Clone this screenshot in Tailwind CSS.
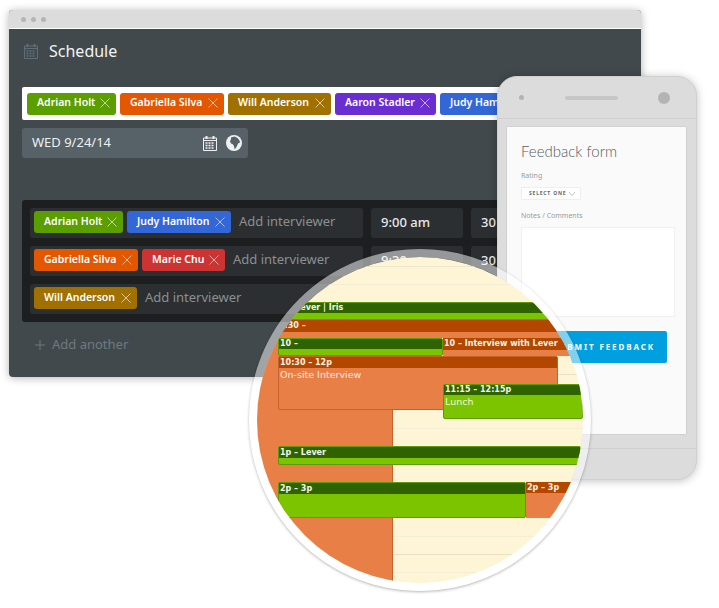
<!DOCTYPE html>
<html>
<head>
  <title>Schedule</title>
  <meta name="viewport" content="width=device-width, initial-scale=1">
  <script src="https://cdn.jsdelivr.net/npm/@tailwindcss/browser@4"></script>
</head>
<body class="bg-white font-['Noto_Sans',sans-serif]">
  <main class="relative w-[719px] h-[608px] overflow-hidden">

    <!-- desktop window -->
    <section class="absolute left-[9px] top-[10px] w-[632px] h-[367px] flex flex-col rounded-[4px] overflow-hidden bg-[#41494c] shadow-[0_1px_8px_rgba(0,0,0,0.3)]">
      <div class="h-[19px] shrink-0 flex items-center gap-[5px] pl-[12px] bg-[#dcdcdc] border-b border-white">
        <span class="w-[5px] h-[5px] rounded-full bg-[#b5b5b5]"></span>
        <span class="w-[5px] h-[5px] rounded-full bg-[#b5b5b5]"></span>
        <span class="w-[5px] h-[5px] rounded-full bg-[#b5b5b5]"></span>
      </div>
      <div class="flex flex-col pl-[13px]">
        <header class="h-[44px] flex items-center gap-[11px] pl-[2px] text-[#f2f3f3] text-[16px]">
          <svg width="14" height="16" viewBox="0 0 14 16" fill="none" stroke="#5f6f78"><path d="M.5 3h13v12.500H.5zM.5 5.500h13"/><path d="M3.500 1v3M10.500 1v3" stroke-width="2"/><path d="M2.500 8h9M2.500 10.500h9M2.500 13h9" stroke-width="1.500" stroke-dasharray="2 1"/></svg>
          Schedule
        </header>

        <div class="mt-[14px] h-[33px] w-[540px] flex items-center gap-[4px] pl-[5px] bg-white rounded-[2px] whitespace-nowrap">
          <span class="h-[22px] w-[89px] shrink-0 flex items-center justify-between pl-[10px] pr-[6px] pb-[1px] rounded-[3px] bg-[#5a9e00] text-white text-[10.500px] font-semibold">Adrian Holt
            <svg width="10" height="10" viewBox="0 0 10 10" stroke="#fff" stroke-opacity=".6"><path d="M.5.500l9 9M9.500.500l-9 9"/></svg></span>
          <span class="h-[22px] w-[104px] shrink-0 flex items-center justify-between pl-[10px] pr-[6px] pb-[1px] rounded-[3px] bg-[#e25700] text-white text-[10.500px] font-semibold">Gabriella Silva
            <svg width="10" height="10" viewBox="0 0 10 10" stroke="#fff" stroke-opacity=".6"><path d="M.5.500l9 9M9.500.500l-9 9"/></svg></span>
          <span class="h-[22px] w-[103px] shrink-0 flex items-center justify-between pl-[10px] pr-[6px] pb-[1px] rounded-[3px] bg-[#a07000] text-white text-[10.500px] font-semibold">Will Anderson
            <svg width="10" height="10" viewBox="0 0 10 10" stroke="#fff" stroke-opacity=".6"><path d="M.5.500l9 9M9.500.500l-9 9"/></svg></span>
          <span class="h-[22px] w-[101px] shrink-0 flex items-center justify-between pl-[10px] pr-[6px] pb-[1px] rounded-[3px] bg-[#6a2dd1] text-white text-[10.500px] font-semibold">Aaron Stadler
            <svg width="10" height="10" viewBox="0 0 10 10" stroke="#fff" stroke-opacity=".6"><path d="M.5.500l9 9M9.500.500l-9 9"/></svg></span>
          <span class="h-[22px] w-[104px] shrink-0 flex items-center justify-between pl-[10px] pr-[6px] pb-[1px] rounded-[3px] bg-[#3366d6] text-white text-[10.500px] font-semibold">Judy Hamilton
            <svg width="10" height="10" viewBox="0 0 10 10" stroke="#fff" stroke-opacity=".6"><path d="M.5.500l9 9M9.500.500l-9 9"/></svg></span>
        </div>

        <div class="mt-[8px] h-[30px] w-[226px] flex items-center justify-between pl-[10px] pr-[6px] rounded-[3px] bg-[#566268] text-[#eef0f0] text-[13px]">
          WED 9/24/14
          <div class="flex items-center gap-[9px]">
            <svg width="14" height="16" viewBox="0 0 14 16" fill="none" stroke="#f0f0f0"><path d="M.5 3h13v12.500H.5zM.5 5.500h13"/><path d="M3.500 1v3M10.500 1v3" stroke-width="2"/><path d="M2.500 8h9M2.500 10.500h9M2.500 13h9" stroke-width="1.500" stroke-dasharray="2 1"/></svg>
            <svg width="16" height="16" viewBox="0 0 16 16"><circle cx="8" cy="8" r="8" fill="#f0f0f0"/><path d="M5 2.500l3.500-1 3 1.500 2 2.500.5 2-2 1-1 2.500-1.500 2.500-1 .5-.5-3-1.500-2-1.500-.5-1-2 1-2.500z" fill="#566268"/></svg>
          </div>
        </div>

        <div class="mt-[42px] h-[122px] flex flex-col gap-[8px] p-[8px] rounded-l-[3px] bg-[#1c1e1f] whitespace-nowrap">
          <div class="flex gap-[8px]">
            <div class="w-[333px] h-[30px] flex items-center gap-[4px] pl-[4px] rounded-[3px] bg-[#2c2f31]">
              <span class="h-[22px] w-[89px] flex items-center justify-between pl-[10px] pr-[6px] pb-[1px] -mt-[2px] rounded-[3px] bg-[#5a9e00] text-white text-[10.500px] font-semibold">Adrian Holt
                <svg width="10" height="10" viewBox="0 0 10 10" stroke="#fff" stroke-opacity=".6"><path d="M.5.500l9 9M9.500.500l-9 9"/></svg></span>
              <span class="h-[22px] w-[104px] flex items-center justify-between pl-[10px] pr-[6px] pb-[1px] -mt-[2px] rounded-[3px] bg-[#3366d6] text-white text-[10.500px] font-semibold">Judy Hamilton
                <svg width="10" height="10" viewBox="0 0 10 10" stroke="#fff" stroke-opacity=".6"><path d="M.5.500l9 9M9.500.500l-9 9"/></svg></span>
              <span class="ml-[4px] -mt-[2px] text-[13px] text-[#8b8f91]">Add interviewer</span>
            </div>
            <div class="w-[92px] h-[30px] flex items-center pl-[10px] rounded-[3px] bg-[#2c2f31] text-[#e8e9e9] text-[13px] font-medium">9:00 am</div>
            <div class="w-[92px] h-[30px] flex items-center pl-[10px] rounded-[3px] bg-[#2c2f31] text-[#e8e9e9] text-[13px] font-medium">30 min</div>
          </div>
          <div class="flex gap-[8px]">
            <div class="w-[333px] h-[30px] flex items-center gap-[4px] pl-[4px] rounded-[3px] bg-[#2c2f31]">
              <span class="h-[22px] w-[104px] flex items-center justify-between pl-[10px] pr-[6px] pb-[1px] -mt-[2px] rounded-[3px] bg-[#e25700] text-white text-[10.500px] font-semibold">Gabriella Silva
                <svg width="10" height="10" viewBox="0 0 10 10" stroke="#fff" stroke-opacity=".6"><path d="M.5.500l9 9M9.500.500l-9 9"/></svg></span>
              <span class="h-[22px] w-[83px] flex items-center justify-between pl-[10px] pr-[6px] pb-[1px] -mt-[2px] rounded-[3px] bg-[#cc3333] text-white text-[10.500px] font-semibold">Marie Chu
                <svg width="10" height="10" viewBox="0 0 10 10" stroke="#fff" stroke-opacity=".6"><path d="M.5.500l9 9M9.500.500l-9 9"/></svg></span>
              <span class="ml-[4px] -mt-[2px] text-[13px] text-[#8b8f91]">Add interviewer</span>
            </div>
            <div class="w-[92px] h-[30px] flex items-center pl-[10px] rounded-[3px] bg-[#2c2f31] text-[#e8e9e9] text-[13px] font-medium">9:30 am</div>
            <div class="w-[92px] h-[30px] flex items-center pl-[10px] rounded-[3px] bg-[#2c2f31] text-[#e8e9e9] text-[13px] font-medium">30 min</div>
          </div>
          <div class="flex gap-[8px]">
            <div class="w-[333px] h-[30px] flex items-center gap-[4px] pl-[4px] rounded-[3px] bg-[#2c2f31]">
              <span class="h-[22px] w-[103px] flex items-center justify-between pl-[10px] pr-[6px] pb-[1px] -mt-[2px] rounded-[3px] bg-[#a07000] text-white text-[10.500px] font-semibold">Will Anderson
                <svg width="10" height="10" viewBox="0 0 10 10" stroke="#fff" stroke-opacity=".6"><path d="M.5.500l9 9M9.500.500l-9 9"/></svg></span>
              <span class="ml-[4px] -mt-[2px] text-[13px] text-[#8b8f91]">Add interviewer</span>
            </div>
            <div class="w-[92px] h-[30px] rounded-[3px] bg-[#2c2f31]"></div>
            <div class="w-[92px] h-[30px] rounded-[3px] bg-[#2c2f31]"></div>
          </div>
        </div>

        <div class="h-[45px] flex items-center gap-[7px] pl-[13px] text-[13px] text-[#6f7a7f]">
          <svg width="10" height="10" viewBox="0 0 10 10" stroke="#6f7a7f"><path d="M5 0v10M0 5h10"/></svg>
          Add another
        </div>
      </div>
    </section>

    <!-- phone -->
    <section class="absolute left-[497px] top-[76px] w-[200px] h-[404px] flex flex-col rounded-[20px] border border-[#d0d0d0] bg-[#dcdcdc] shadow-[0_1px_8px_rgba(0,0,0,0.25)]">
      <div class="h-[42px] shrink-0 flex items-center justify-between pl-[21px] pr-[26px] border-b border-[#cfcfcf]">
        <span class="w-[5px] h-[5px] rounded-full bg-[#b4b4b4]"></span>
        <span class="w-[53px] h-[4px] rounded-full bg-[#c6c6c6]"></span>
        <span class="w-[12px] h-[12px] rounded-full bg-[#b4b4b4]"></span>
      </div>
      <div class="mt-[8px] ml-[9px] mr-[10px] h-[307px] shrink-0 flex flex-col pl-[14px] pr-[11px] bg-[#fafafa] shadow-[0_0_1px_rgba(0,0,0,0.3)]">
        <h2 class="mt-[12px] h-[24px] font-['Lato',sans-serif] text-[15px] leading-[24px] font-light text-[#555b5e]">Feedback form</h2>
        <p class="mt-[7px] text-[7px] leading-[12px] text-[#9a9a9a]">Rating</p>
        <div class="mt-[5px] w-[60px] h-[13px] flex items-center justify-between pl-[7px] pr-[5px] bg-white border border-[#eeeeee] text-[5px] font-bold tracking-[0.8px] text-[#666] whitespace-nowrap">SELECT ONE
          <svg class="shrink-0" width="6" height="4" viewBox="0 0 6 4" fill="none" stroke="#aaa" stroke-width=".7"><path d="M0 0l3 3.500L6 0"/></svg></div>
        <p class="mt-[10px] text-[7px] leading-[12px] text-[#9a9a9a]">Notes / Comments</p>
        <div class="mt-[5px] h-[90px] bg-white border border-[#f0f0f0]"></div>
        <div class="mt-[14px] ml-[20px] mr-[8px] h-[32px] flex items-center justify-center rounded-[2px] bg-[#00a0e0] text-white text-[8px] font-bold tracking-[1.900px] whitespace-nowrap">SUBMIT FEEDBACK</div>
      </div>
      <div class="mt-[14px] border-t border-[#cfcfcf]"></div>
    </section>

    <!-- magnified calendar -->
    <section class="absolute left-[249px] top-[249px] w-[342px] h-[342px] rounded-full border-[8px] border-white/50 overflow-hidden shadow-[0_1px_3px_rgba(0,0,0,0.3)]">
      <div class="relative w-[326px] h-[326px] bg-[#fdf5d6] font-['DejaVu_Sans',sans-serif] text-[8px] font-bold text-[#f5f5e8] leading-[11px]">
        <div class="absolute left-0 top-[9px] w-full border-t border-[#eee7cc]"></div>
        <div class="absolute left-0 top-[27px] w-full border-t border-[#f4ecd0]"></div>
        <div class="absolute left-0 top-[63px] h-[263px] w-[136px] bg-[#e87f46] border-r border-[#c8602a]"></div>
        <div class="absolute left-[136px] top-[171px] w-[190px] border-t border-dotted border-[#efe7cb]"></div>
        <div class="absolute left-[136px] top-[279px] w-[190px] border-t border-dotted border-[#efe7cb]"></div>
        <div class="absolute left-[136px] top-[297px] w-[190px] border-t border-[#e8e0c4]"></div>
        <div class="absolute left-[136px] top-[315px] w-[190px] border-t border-dotted border-[#efe7cb]"></div>
        <div class="absolute left-[301px] top-[117px] w-[25px] border-t border-[#e8e0c4]"></div>

        <!-- green, then orange, events -->
        <div class="absolute left-[21px] top-[45px] w-[320px] h-[18px] rounded-[2px] bg-[#7cc400] border border-[#5f9a00]"><div class="h-[10px] pl-[1px] bg-[#2f6200] text-[8px] leading-[10px] whitespace-nowrap">9 – Lever | Iris</div></div>
        <div class="absolute left-[21px] top-[63px] w-[320px] h-[18px] bg-[#e87f46]"><div class="h-[12px] pl-[1px] bg-[#b34700] leading-[12px]">9:30 –</div></div>
        <div class="absolute left-[186px] top-[81px] w-[140px] h-[18px] bg-[#e87f46]"><div class="h-[12px] pl-[1px] bg-[#b34700] leading-[12px] whitespace-nowrap">10 – Interview with Lever</div></div>
        <div class="absolute left-[21px] top-[81px] w-[165px] h-[18px] rounded-[2px] bg-[#7cc400] border border-[#5f9a00]"><div class="h-[10px] pl-[1px] bg-[#2f6200] leading-[10px]">10 –</div></div>
        <div class="absolute left-[21px] top-[99px] w-[280px] h-[54px] rounded-[2px] bg-[#e87f46] border border-[#c8602a]"><div class="h-[11px] pl-[1px] bg-[#b34700] leading-[11px]">10:30 – 12p</div><p class="pl-[1px] pt-[1px] font-normal text-[9.500px] whitespace-nowrap text-[#fbeadd]">On-site Interview</p></div>
        <div class="absolute left-[186px] top-[127px] w-[140px] h-[35px] rounded-[2px] bg-[#7cc400] border border-[#5f9a00]"><div class="h-[10px] pl-[1px] bg-[#2f6200] leading-[10px] whitespace-nowrap">11:15 – 12:15p</div><p class="pl-[1px] pt-[1px] font-normal text-[9.500px] text-[#f0f8dc]">Lunch</p></div>
        <div class="absolute left-[21px] top-[189px] w-[303px] h-[19px] rounded-[2px] bg-[#7cc400] border border-[#5f9a00]"><div class="h-[11px] pl-[1px] bg-[#2f6200] leading-[11px]">1p – Lever</div></div>
        <div class="absolute left-[269px] top-[225px] w-[60px] h-[36px] bg-[#e87f46]"><div class="h-[11px] pl-[1px] bg-[#b34700] leading-[11px]">2p – 3p</div></div>
        <div class="absolute left-[21px] top-[225px] w-[248px] h-[36px] rounded-[2px] bg-[#7cc400] border border-[#5f9a00]"><div class="h-[11px] pl-[1px] bg-[#2f6200] leading-[11px]">2p – 3p</div></div>
      </div>
    </section>
  </main>
</body>
</html>
